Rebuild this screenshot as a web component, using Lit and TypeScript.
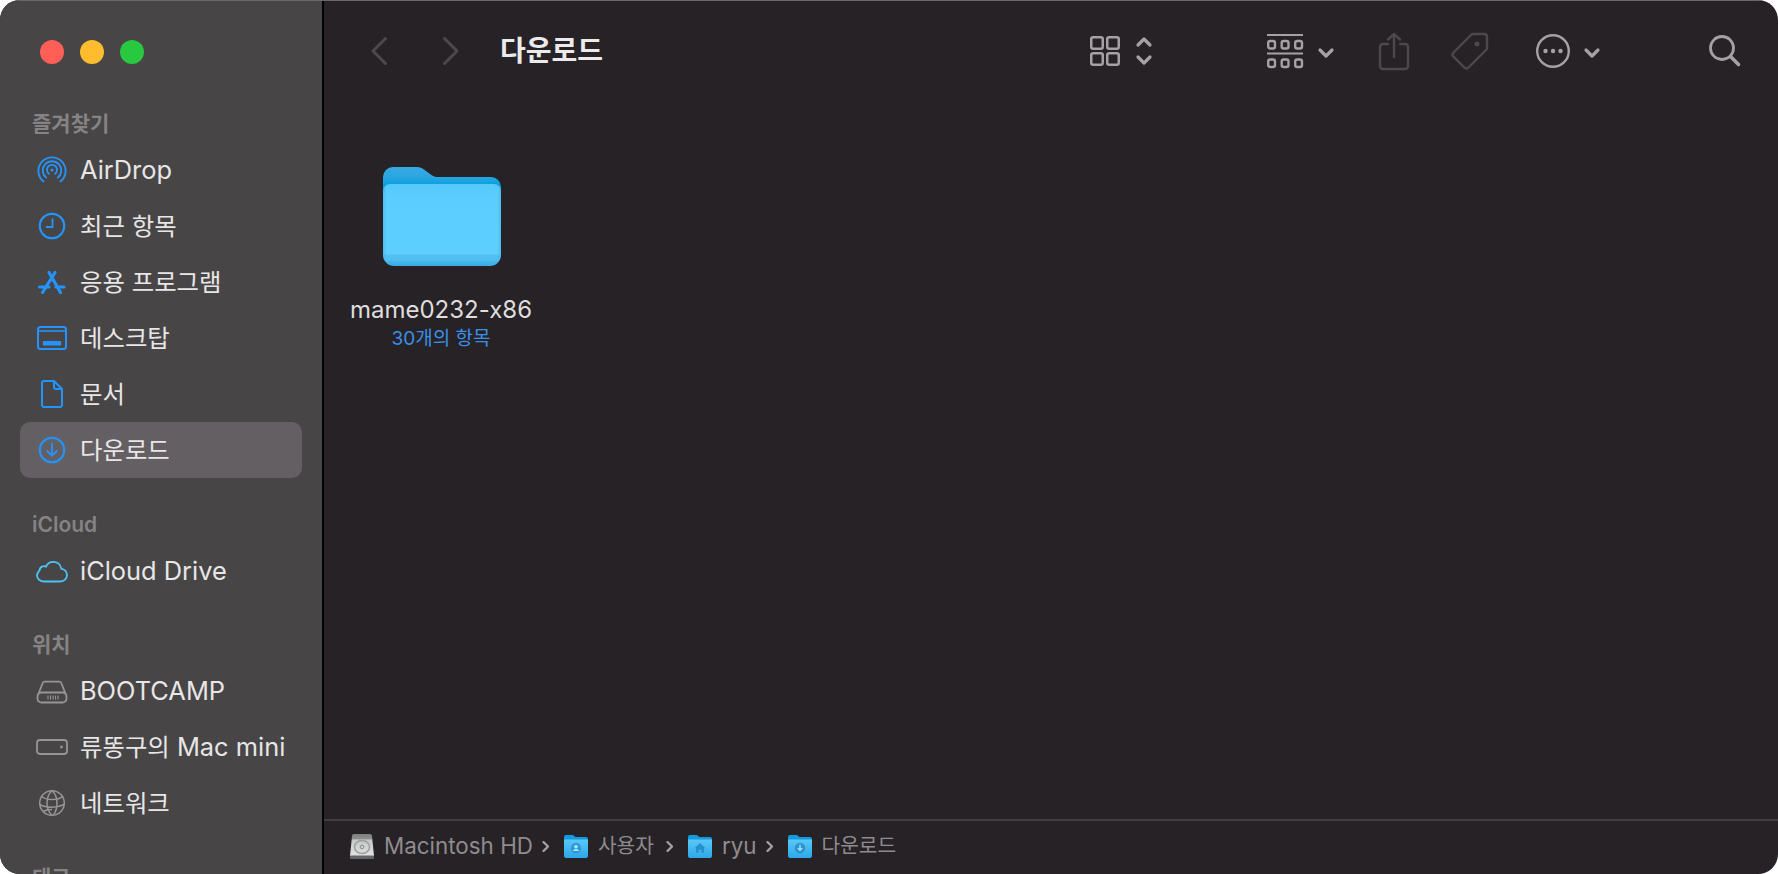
import { LitElement, html, css, svg } from "lit";
import { customElement } from "lit/decorators.js";

const BLUE = "#2494fc";
const GRAY = "#979597";

const icons: Record<string, unknown> = {
  airdrop: svg`<g fill="none" stroke="${BLUE}" stroke-width="1.800" stroke-linecap="round">
    <path d="M7.500 27.500a13.600 13.600 0 1 1 17 0"/><path d="M10.200 23.600a9.200 9.200 0 1 1 11.600 0"/>
    <path d="M13 19.800a5 5 0 1 1 6 0"/><circle cx="16" cy="16" r="1.600" fill="${BLUE}" stroke="none"/></g>`,
  clock: svg`<g fill="none" stroke="${BLUE}" stroke-width="2.200"><circle cx="16" cy="16" r="12.200"/><path d="M16.500 8.500v8.500H10" stroke-width="1.800"/></g>`,
  apps: svg`<g fill="none" stroke="${BLUE}" stroke-width="3.200" stroke-linecap="round"><path d="M13 6.500l11.500 20"/><path d="M19 6.500L6.500 26.500"/><path d="M3.500 21h9.500M20 21h8"/></g>`,
  desktop: svg`<g fill="none" stroke="${BLUE}" stroke-width="2"><rect x="2" y="5" width="28" height="22" rx="2.500"/><path d="M2 9h28" stroke-width="1.600"/></g><rect x="7" y="19" width="18" height="4.500" fill="${BLUE}"/>`,
  doc: svg`<path d="M8 3h10l8 8v16a2 2 0 0 1-2 2H8a2 2 0 0 1-2-2V5a2 2 0 0 1 2-2zM18 3v6a2 2 0 0 0 2 2h6" fill="none" stroke="${BLUE}" stroke-width="2" stroke-linejoin="round"/>`,
  download: svg`<g fill="none" stroke="${BLUE}" stroke-width="2.200"><circle cx="16" cy="16" r="12.200"/><path d="M16 9.500v12M11.200 17l4.800 4.800 4.800-4.800" stroke-width="1.800" stroke-linecap="round" stroke-linejoin="round"/></g>`,
  cloud: svg`<path d="M8.500 26.500h15.500c4.200 0 7-2.800 7-6.400 0-3.300-2.400-5.900-5.600-6.300-.8-4.200-4-7-8-7-3.400 0-6.100 1.900-7.500 4.900-1-.5-2-.6-3-.4-2 .4-3.200 2-3.400 4C1.900 17 1 18.600 1 20.500c0 3.300 3 6 7.500 6z" fill="none" stroke="#4cc4f8" stroke-width="1.800"/>`,
  disk: svg`<g fill="none" stroke="${GRAY}" stroke-width="1.800"><path d="M2 20l4.500-11.500c.5-1.200 1.300-1.800 2.500-1.800h14c1.200 0 2 .6 2.500 1.800L30 20"/><rect x="1.500" y="17.500" width="29" height="10" rx="4"/><path d="M12 20.500v4M14.500 20.500v4M17 20.500v4M19.500 20.500v4M22 20.500v4" stroke-width="1.100"/></g>`,
  mini: svg`<rect x="1" y="9" width="30" height="14" rx="3" fill="none" stroke="${GRAY}" stroke-width="1.800"/><circle cx="25.500" cy="16" r="1.400" fill="${GRAY}"/>`,
  globe: svg`<g fill="none" stroke="${GRAY}" stroke-width="1.500"><circle cx="16" cy="16" r="12.300"/><path d="M16 3.700c-3 2.600-5 7-5 12.300s2 9.700 5 12.300M16 3.700c3 2.600 5 7 5 12.300s-1 8.800-3.500 11.800M5.500 9.500c3 2.300 6.700 3 10.500 3s8-.8 10.500-3M3.800 17.500c3.500 2 7.700 2.700 12.200 2.700s8-.6 12-2.700M7 24.500c2.700-1.500 5.500-2 9-2"/></g>`,
};

const sections = [
  { label: "즐겨찾기", items: [
    ["airdrop", "AirDrop"], ["clock", "최근 항목"], ["apps", "응용 프로그램"],
    ["desktop", "데스크탑"], ["doc", "문서"], ["download", "다운로드", true]] },
  { label: "iCloud", items: [["cloud", "iCloud Drive"]] },
  { label: "위치", items: [["disk", "BOOTCAMP"], ["mini", "류똥구의 Mac mini"], ["globe", "네트워크"]] },
  { label: "태그", items: [] },
];

const chevD = svg`<path d="M2 2l6 6 6-6" fill="none" stroke="currentColor" stroke-width="3.200" stroke-linecap="round" stroke-linejoin="round"/>`;

const crumbGlyph: Record<string, unknown> = {
  user: svg`<circle cx="12" cy="13" r="5.200" fill="#1f86c0" opacity=".6"/><circle cx="12" cy="11.800" r="1.800" fill="#a9e2fa"/><path d="M9 16c.5-1.600 1.600-2.100 3-2.100s2.500.5 3 2.100z" fill="#a9e2fa"/>`,
  home: svg`<path d="M12 8l5.500 5.200H16v4.600h-2.600v-3h-2.800v3H8v-4.600H6.500z" fill="#1f86c0" opacity=".8"/>`,
  down: svg`<circle cx="12" cy="13" r="5.200" fill="#1f86c0" opacity=".75"/><path d="M12 9.800v5.400M9.700 13l2.300 2.300 2.300-2.300" fill="none" stroke="#a9e2fa" stroke-width="1.300"/>`,
};

const sepIcon = svg`<svg class="sep" width="8" height="11" viewBox="0 0 8 11" aria-hidden="true"><path d="M1.500 1l4.500 4.500L1.500 10" fill="none" stroke="currentColor" stroke-width="2.300" stroke-linecap="round" stroke-linejoin="round"/></svg>`;

// Hangul runs are set slightly smaller than Latin, as the reference's system font does.
function mixed(text: string) {
  return text.split(/([가-힣]+(?:\s+[가-힣]+)*)/).filter(Boolean).map((part) =>
    /[가-힣]/.test(part) ? html`<span class="ko">${part}</span>` : part);
}

@customElement("app-root")
export class AppRoot extends LitElement {
  static styles = css`
    :host { display: block; width: 1778px; height: 874px; background: #fff; overflow: hidden; }
    * { box-sizing: border-box; }
    .window { position: relative; display: flex; width: 1778px; height: 874px; border-radius: 20px; overflow: hidden;
      font-family: Inter, "Noto Sans CJK KR", sans-serif; background: #262226; }
    .window::after { content: ""; position: absolute; left: 0; right: 0; top: 0; height: 1px; background: #6a686a; }
    .sidebar { width: 324px; flex: none; height: 874px; overflow: hidden; background: #474546; border-right: 2px solid #000; padding-top: 104px; }
    .lights { position: absolute; left: 40px; top: 40px; display: flex; gap: 16px; }
    .light { width: 24px; height: 24px; border-radius: 50%; }
    .section { margin-bottom: 26.500px; }
    .section-label { height: 38px; line-height: 40px; padding-left: 32px; font-size: 21px; font-weight: 600; color: #858384; }
    .row { display: flex; align-items: center; gap: 13px; height: 56px; width: 282px; margin-left: 20px; padding-left: 16px;
      border-radius: 10px; font-size: 25.400px; line-height: 32px; color: #e8e6e7; white-space: nowrap; }
    .row.sel { background: #635f62; }
    .row svg { width: 32px; height: 32px; flex: none; }
    .row .label { margin-left: -1px; }
    .row .ko { font-size: 24.400px; }
    .main { flex: 1; min-width: 0; display: flex; flex-direction: column; }
    .toolbar { height: 102px; flex: none; display: flex; align-items: center; padding-left: 47px; color: #a5a2a5; }
    .toolbar svg { display: block; flex: none; overflow: visible; }
    .dim { color: #4c494c; }
    .title { margin-left: 41px; font-size: 28px; line-height: 36px; font-weight: 700; color: #eceaeb; width: 590px; white-space: nowrap; }
    .stack { display: flex; flex-direction: column; gap: 8px; margin-left: 16px; }
    .content { flex: 1; padding: 65px 0 0 27px; }
    .item { width: 180px; display: flex; flex-direction: column; align-items: center; }
    .folder { display: block; width: 118px; height: 99px; margin: 0 0 29px 2px; }
    .name { font-size: 24px; line-height: 30px; color: #dfddde; white-space: nowrap; }
    .sub { font-size: 19px; line-height: 26px; margin-top: 1px; color: #3a90e6; white-space: nowrap; }
    .status { height: 55px; flex: none; border-top: 2px solid #413e41; display: flex; align-items: center; padding: 0 0 3px 26px;
      font-size: 22.400px; line-height: 30px; color: #8e8c8e; white-space: nowrap; }
    .status svg { flex: none; display: block; }
    .status .ko { font-size: 20.300px; margin-right: 3px; }
    .crumb { display: flex; align-items: center; gap: 10px; }
    .sep { margin: 0 14px 0 9px; color: #a3a1a3; }
  `;

  private folder() {
    return svg`<svg class="folder" viewBox="0 0 118 99" aria-hidden="true">
      <defs>
        <linearGradient id="fb" gradientUnits="userSpaceOnUse" x1="0" y1="0" x2="0" y2="18"><stop offset="0" stop-color="#38a9e2"/><stop offset=".55" stop-color="#2aa6e2"/><stop offset="1" stop-color="#07a0de"/></linearGradient>
        <linearGradient id="ff" x1="0" y1="0" x2="0" y2="1"><stop offset="0" stop-color="#57c7fa"/><stop offset=".15" stop-color="#5ccdff"/><stop offset=".85" stop-color="#5ccfff"/><stop offset=".87" stop-color="#54c0f0"/><stop offset=".94" stop-color="#4fbcf0"/><stop offset=".945" stop-color="#45b6ec"/><stop offset="1" stop-color="#36ade6"/></linearGradient>
        <linearGradient id="fe" x1="0" y1="0" x2="1" y2="0"><stop offset="0" stop-color="#2a9fd8" stop-opacity=".35"/><stop offset=".03" stop-color="#2a9fd8" stop-opacity="0"/><stop offset=".97" stop-color="#2a9fd8" stop-opacity="0"/><stop offset="1" stop-color="#2a9fd8" stop-opacity=".35"/></linearGradient>
      </defs>
      <path d="M0 10a10 10 0 0 1 10-10h24c3 0 5 1 7 2.500l6 4.500c2 1.500 4 3 7 3h54a10 10 0 0 1 10 10v30H0z" fill="url(#fb)"/>
      <path d="M0 24a7 7 0 0 1 7-7h104a7 7 0 0 1 7 7v64a11 11 0 0 1-11 11H11A11 11 0 0 1 0 88z" fill="url(#ff)"/>
      <path d="M0 24a7 7 0 0 1 7-7h104a7 7 0 0 1 7 7v64a11 11 0 0 1-11 11H11A11 11 0 0 1 0 88z" fill="url(#fe)"/>
    </svg>`;
  }

  private crumbFolder(g: string) {
    return svg`<svg width="24" height="23" viewBox="0 0 24 23" aria-hidden="true">
      <defs><linearGradient id="cf" x1="0" y1="0" x2="0" y2="1"><stop offset="0" stop-color="#59c8f8"/><stop offset="1" stop-color="#2ea8e8"/></linearGradient></defs>
      <path d="M0 2a2 2 0 0 1 2-2h6c1 0 1.500.5 2.300 1.100L11.500 2H22a2 2 0 0 1 2 2v4H0z" fill="#149bdc"/>
      <path d="M0 4.500h24V21a2 2 0 0 1-2 2H2a2 2 0 0 1-2-2z" fill="url(#cf)"/>
      ${crumbGlyph[g]}
    </svg>`;
  }

  render() {
    return html`<div class="window">
      <aside class="sidebar">
        <div class="lights">
          <span class="light" style="background:#ff5f57"></span>
          <span class="light" style="background:#febc2e"></span>
          <span class="light" style="background:#28c840"></span>
        </div>
        ${sections.map((s) => html`<section class="section">
          <div class="section-label">${s.label}</div>
          ${s.items.map((it) => html`<div class="row ${it[2] ? "sel" : ""}">
            <svg viewBox="0 0 32 32" aria-hidden="true">${icons[it[0] as string]}</svg><span class="label">${mixed(it[1] as string)}</span>
          </div>`)}
        </section>`)}
      </aside>
      <main class="main">
        <header class="toolbar">
          <svg class="dim" width="16" height="28" viewBox="0 0 16 28"><path d="M14.500 1.500L2 14l12.500 12.500" fill="none" stroke="currentColor" stroke-width="3" stroke-linecap="round" stroke-linejoin="round"/></svg>
          <svg class="dim" style="margin-left:56px" width="16" height="28" viewBox="0 0 16 28"><path d="M1.500 1.500L14 14 1.500 26.500" fill="none" stroke="currentColor" stroke-width="3" stroke-linecap="round" stroke-linejoin="round"/></svg>
          <div class="title">다운로드</div>
          <svg width="30" height="30" viewBox="0 0 30 30"><g fill="none" stroke="currentColor" stroke-width="2.500"><rect x="1.250" y="1.250" width="11.500" height="11.500" rx="2"/><rect x="17.250" y="1.250" width="11.500" height="11.500" rx="2"/><rect x="1.250" y="17.250" width="11.500" height="11.500" rx="2"/><rect x="17.250" y="17.250" width="11.500" height="11.500" rx="2"/></g></svg>
          <div class="stack">
            <svg width="16" height="10" viewBox="0 0 16 10"><path d="M2 8l6-6 6 6" fill="none" stroke="currentColor" stroke-width="3.200" stroke-linecap="round" stroke-linejoin="round"/></svg>
            <svg width="16" height="10" viewBox="0 0 16 10">${chevD}</svg>
          </div>
          <svg style="margin-left:115px" width="36" height="34" viewBox="0 0 36 34"><g fill="none" stroke="currentColor"><path d="M0 1h36M0 19.500h36" stroke-width="2.200"/><g stroke-width="2.400">${[0, 13.5, 27].map((x) => svg`<rect x="${x + 1.2}" y="7" width="6.800" height="7.500" rx="2"/><rect x="${x + 1.2}" y="25.500" width="6.800" height="7.500" rx="2"/>`)}</g></g></svg>
          <svg style="margin-left:15px;margin-top:3px" width="16" height="10" viewBox="0 0 16 10">${chevD}</svg>
          <svg class="dim" style="margin-left:45px" width="30" height="38" viewBox="0 0 30 38"><g fill="none" stroke="currentColor" stroke-width="2.400" stroke-linecap="round" stroke-linejoin="round"><path d="M9 12H4a3 3 0 0 0-3 3v19a3 3 0 0 0 3 3h22a3 3 0 0 0 3-3V15a3 3 0 0 0-3-3h-5"/><path d="M15 25V2M9 7.500L15 2l6 5.500"/></g></svg>
          <svg class="dim" style="margin-left:42px" width="38" height="38" viewBox="0 0 38 38"><path d="M2.500 20.500L20 3c.7-.7 1.500-1 2.500-1H33c1.700 0 3 1.300 3 3v10.500c0 1-.3 1.800-1 2.500L17.500 35.500c-1.200 1.200-3 1.200-4.200 0L2.500 24.700c-1.200-1.200-1.200-3 0-4.200z" fill="none" stroke="currentColor" stroke-width="2.400"/><circle cx="26" cy="12" r="2.500" fill="currentColor"/></svg>
          <svg style="margin-left:47px" width="34" height="34" viewBox="0 0 34 34"><circle cx="17" cy="17" r="15.800" fill="none" stroke="currentColor" stroke-width="2.400"/><circle cx="9.500" cy="17" r="2.200" fill="currentColor"/><circle cx="17" cy="17" r="2.200" fill="currentColor"/><circle cx="24.500" cy="17" r="2.200" fill="currentColor"/></svg>
          <svg style="margin-left:14px;margin-top:3px" width="16" height="10" viewBox="0 0 16 10">${chevD}</svg>
          <svg style="margin-left:109px" width="32" height="32" viewBox="0 0 32 32"><circle cx="13" cy="13" r="11.500" fill="none" stroke="currentColor" stroke-width="2.800"/><path d="M21.500 21.500l8 8" stroke="currentColor" stroke-width="3.600" stroke-linecap="round"/></svg>
        </header>
        <div class="content">
          <div class="item">
            ${this.folder()}
            <div class="name">mame0232-x86</div>
            <div class="sub">${mixed("30개의 항목")}</div>
          </div>
        </div>
        <footer class="status">
          <div class="crumb">
            <svg width="24" height="25" viewBox="0 0 24 25" aria-hidden="true"><defs><linearGradient id="hd" x1="0" y1="0" x2="0" y2="1"><stop offset="0" stop-color="#7e7f7f"/><stop offset=".22" stop-color="#8f9190"/><stop offset=".27" stop-color="#c5c8c7"/><stop offset="1" stop-color="#e0e3e2"/></linearGradient></defs><path d="M2 2a2 2 0 0 1 2-2h16a2 2 0 0 1 2 2l2 20H0z" fill="url(#hd)"/><ellipse cx="12" cy="13" rx="7.500" ry="6.500" fill="none" stroke="#9da09f" stroke-width="1.500"/><circle cx="12" cy="13" r="1.800" fill="none" stroke="#8a8a8a" stroke-width="1"/><rect y="21.500" width="24" height="3.500" rx="1" fill="#656665"/></svg>
            <span>Macintosh HD</span>
          </div>
          ${sepIcon}
          <div class="crumb">${this.crumbFolder("user")}${mixed("사용자")}</div>
          ${sepIcon}
          <div class="crumb">${this.crumbFolder("home")}<span>ryu</span></div>
          ${sepIcon}
          <div class="crumb">${this.crumbFolder("down")}${mixed("다운로드")}</div>
        </footer>
      </main>
    </div>`;
  }
}
